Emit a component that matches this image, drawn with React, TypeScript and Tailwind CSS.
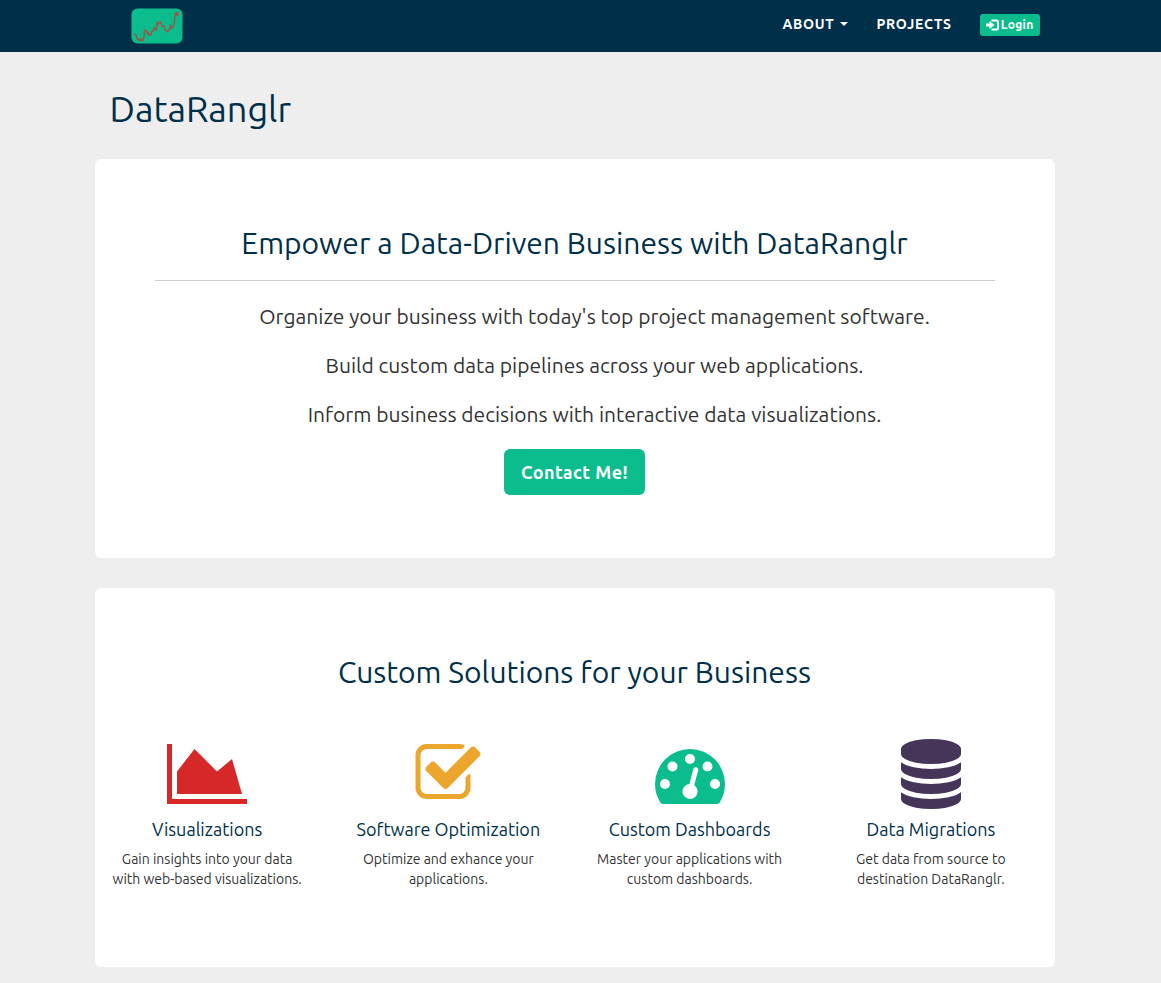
import type { ReactNode } from "react";

function GlyphIcon({ viewBox, className, d }: { viewBox: string; className: string; d: string }) {
  return (
    <svg viewBox={viewBox} className={className} fill="currentColor" aria-hidden="true">
      <path d={d} />
    </svg>
  );
}

const AREA_CHART = "M2048 1536v128h-2048v-1536h128v1408h1920zm-384-1024l256 896h-1664v-576l448-576 576 576z";
const CHECK_SQUARE =
  "M1472 930v318q0 119-84.5 203.5t-203.5 84.5h-832q-119 0-203.5-84.5t-84.5-203.5v-832q0-119 84.5-203.5t203.5-84.5h832q63 0 117 25 15 7 18 23 3 17-9 29l-49 49q-10 10-23 10-3 0-9-2-23-6-45-6h-832q-66 0-113 47t-47 113v832q0 66 47 113t113 47h832q66 0 113-47t47-113v-254q0-13 9-22l64-64q10-10 23-10 6 0 12 3 20 8 20 29zm231-489l-814 814q-24 24-57 24t-57-24l-430-430q-24-24-24-57t24-57l110-110q24-24 57-24t57 24l263 263 647-647q24-24 57-24t57 24l110 110q24 24 24 57t-24 57z";
const GAUGE =
  "M384 1152q0-53-37.5-90.5t-90.5-37.5-90.5 37.5-37.5 90.5 37.5 90.5 90.5 37.5 90.5-37.5 37.5-90.5zm192-448q0-53-37.5-90.5t-90.5-37.5-90.5 37.5-37.5 90.5 37.5 90.5 90.5 37.5 90.5-37.5 37.5-90.5zm428 481l101-382q6-26-7.5-48.5t-38.5-29.5-48 6.5-30 39.5l-101 382q-60 5-107 43.5t-63 98.5q-20 77 20 146t117 89 146-20 89-117q16-60-6-117t-72-91zm660-33q0-53-37.5-90.5t-90.5-37.5-90.5 37.5-37.5 90.5 37.5 90.5 90.5 37.5 90.5-37.5 37.5-90.5zm-640-640q0-53-37.5-90.5t-90.5-37.5-90.5 37.5-37.5 90.5 37.5 90.5 90.5 37.5 90.5-37.5 37.5-90.5zm448 192q0-53-37.5-90.5t-90.5-37.5-90.5 37.5-37.5 90.5 37.5 90.5 90.5 37.5 90.5-37.5 37.5-90.5zm320 448q0 261-141 483-19 29-54 29h-1402q-35 0-54-29-141-221-141-483 0-182 71-348t191-286 286-191 348-71 348 71 286 191 191 286 71 348z";
const DATABASE =
  "M896 768q237 0 443-43t325-127v170q0 69-103 128t-280 93.5-385 34.5-385-34.5-280-93.5-103-128v-170q119 84 325 127t443 43zm0 768q237 0 443-43t325-127v170q0 69-103 128t-280 93.5-385 34.5-385-34.5-280-93.5-103-128v-170q119 84 325 127t443 43zm0-384q237 0 443-43t325-127v170q0 69-103 128t-280 93.5-385 34.5-385-34.5-280-93.5-103-128v-170q119 84 325 127t443 43zm0-1152q208 0 385 34.5t280 93.5 103 128v128q0 69-103 128t-280 93.5-385 34.5-385-34.5-280-93.5-103-128v-128q0-69 103-128t280-93.5 385-34.5z";

function Logo() {
  return (
    <svg viewBox="0 0 52 36" className="h-9 w-13" role="img" aria-label="DataRanglr home">
      <rect x="0.5" y="0.5" width="51" height="35" rx="6" fill="#0bbd8c" />
      <polyline
        points="3,25.5 5,27 6.5,31.5 9,32.5 9.5,30.5 10.5,32.5 11.7,32.7 13,28.7 13.5,22 15.7,23 16.2,25.5 17.2,24.5 18.3,27.5 20.3,26.3 20.5,24 22.3,22.7 23.3,19.5 25,22 26,14.7 27,16.5 28,14.5 29.7,13.7 31,18.7 33,18 34.3,22 36.3,23.7 38.3,21.3 39.7,17.5 40.5,20.5 42.3,18 43.5,14.7 43.7,7 45,4.7 45.7,7.3 47,5.3 47.3,7.7"
        fill="none"
        stroke="#a35145"
        strokeWidth="1.4"
      />
    </svg>
  );
}

function LoginIcon() {
  return (
    <svg viewBox="0 0 13 12" className="h-3 w-[13px]" aria-hidden="true">
      <path d="M0 4.5h3.5V2l5 4-5 4V7.5H0z" fill="currentColor" />
      <path d="M5.5 1.5h5q1.500 0 1.500 1.500v6q0 1.500-1.500 1.500h-5" fill="none" stroke="currentColor" strokeWidth="2" />
    </svg>
  );
}

function Panel({ title, className, children }: { title: string; className: string; children: ReactNode }) {
  return (
    <section className={`rounded-md bg-white pt-[68px] ${className}`}>
      <h2 className="text-center text-[30px] leading-[33px] text-[#002f49]">{title}</h2>
      {children}
    </section>
  );
}

const points = [
  "Organize your business with today's top project management software.",
  "Build custom data pipelines across your web applications.",
  "Inform business decisions with interactive data visualizations.",
];

const solutions = [
  { title: "Visualizations", text: "Gain insights into your data with web-based visualizations.", icon: <GlyphIcon viewBox="0 0 2048 1792" className="h-[70px] w-20 text-[#d62828]" d={AREA_CHART} /> },
  { title: "Software Optimization", text: "Optimize and exhance your applications.", icon: <GlyphIcon viewBox="0 0 1792 1792" className="size-[70px] text-[#eda62d]" d={CHECK_SQUARE} /> },
  { title: "Custom Dashboards", text: "Master your applications with custom dashboards.", icon: <GlyphIcon viewBox="0 0 1792 1792" className="size-[70px] text-[#0bbd8c]" d={GAUGE} /> },
  { title: "Data Migrations", text: "Get data from source to destination DataRanglr.", icon: <GlyphIcon viewBox="0 0 1792 1792" className="size-[70px] text-[#453659]" d={DATABASE} /> },
];

export default function App() {
  return (
    <div className="min-h-screen bg-[#eeeeee] pb-4 font-['Ubuntu','Noto_Sans',sans-serif] text-[#333333]">
      <header className="bg-[#002f49]">
        <div className="mx-auto flex h-[52px] max-w-[972px] items-center justify-between pr-[27px] pl-9">
          <a href="#home">
            <Logo />
          </a>
          <nav className="flex items-center gap-7 pb-0.5 text-sm font-bold text-white">
            <button type="button" className="flex items-center gap-1.5 pb-0.5 tracking-wider">
              ABOUT
              <svg viewBox="0 0 8 4" className="h-1 w-2" fill="currentColor" aria-hidden="true">
                <path d="M0 0h8L4 4z" />
              </svg>
            </button>
            <a href="#projects" className="pb-0.5 tracking-wider">
              PROJECTS
            </a>
            <a href="#login" className="flex h-[22px] items-center gap-0.5 rounded-[3px] bg-[#0bbd8c] px-1.5 text-xs tracking-wide">
              <LoginIcon />
              Login
            </a>
          </nav>
        </div>
      </header>
      <main className="mx-auto max-w-[972px] pr-3">
        <h1 className="px-[15px] pt-[37px] pb-[30px] text-4xl leading-10 text-[#002f49]">DataRanglr</h1>
        <Panel title="Empower a Data-Driven Business with DataRanglr" className="px-[60px] pb-[63px] text-center">
          <hr className="mt-5 mb-5 border-[#cccccc]" />
          <ul className="flex flex-col gap-[19px] pl-10 text-[21px] leading-[30px]">
            {points.map((point) => (
              <li key={point}>{point}</li>
            ))}
          </ul>
          <a href="#contact" className="mt-5 inline-flex h-[46px] items-center rounded-md bg-[#0bbd8c] px-[17px] text-lg font-bold tracking-wide text-white">
            Contact Me!
          </a>
        </Panel>
        <Panel title="Custom Solutions for your Business" className="mt-[30px] pb-[78px]">
          <div className="mt-[50px] mr-[3px] -ml-2 grid grid-cols-4">
            {solutions.map((item) => (
              <article key={item.title} className="flex flex-col items-center px-[22px] text-center">
                {item.icon}
                <h3 className="mt-2.5 mb-2.5 text-lg leading-5 whitespace-nowrap text-[#002f49]">{item.title}</h3>
                <p className="text-sm leading-5">{item.text}</p>
              </article>
            ))}
          </div>
        </Panel>
      </main>
    </div>
  );
}
